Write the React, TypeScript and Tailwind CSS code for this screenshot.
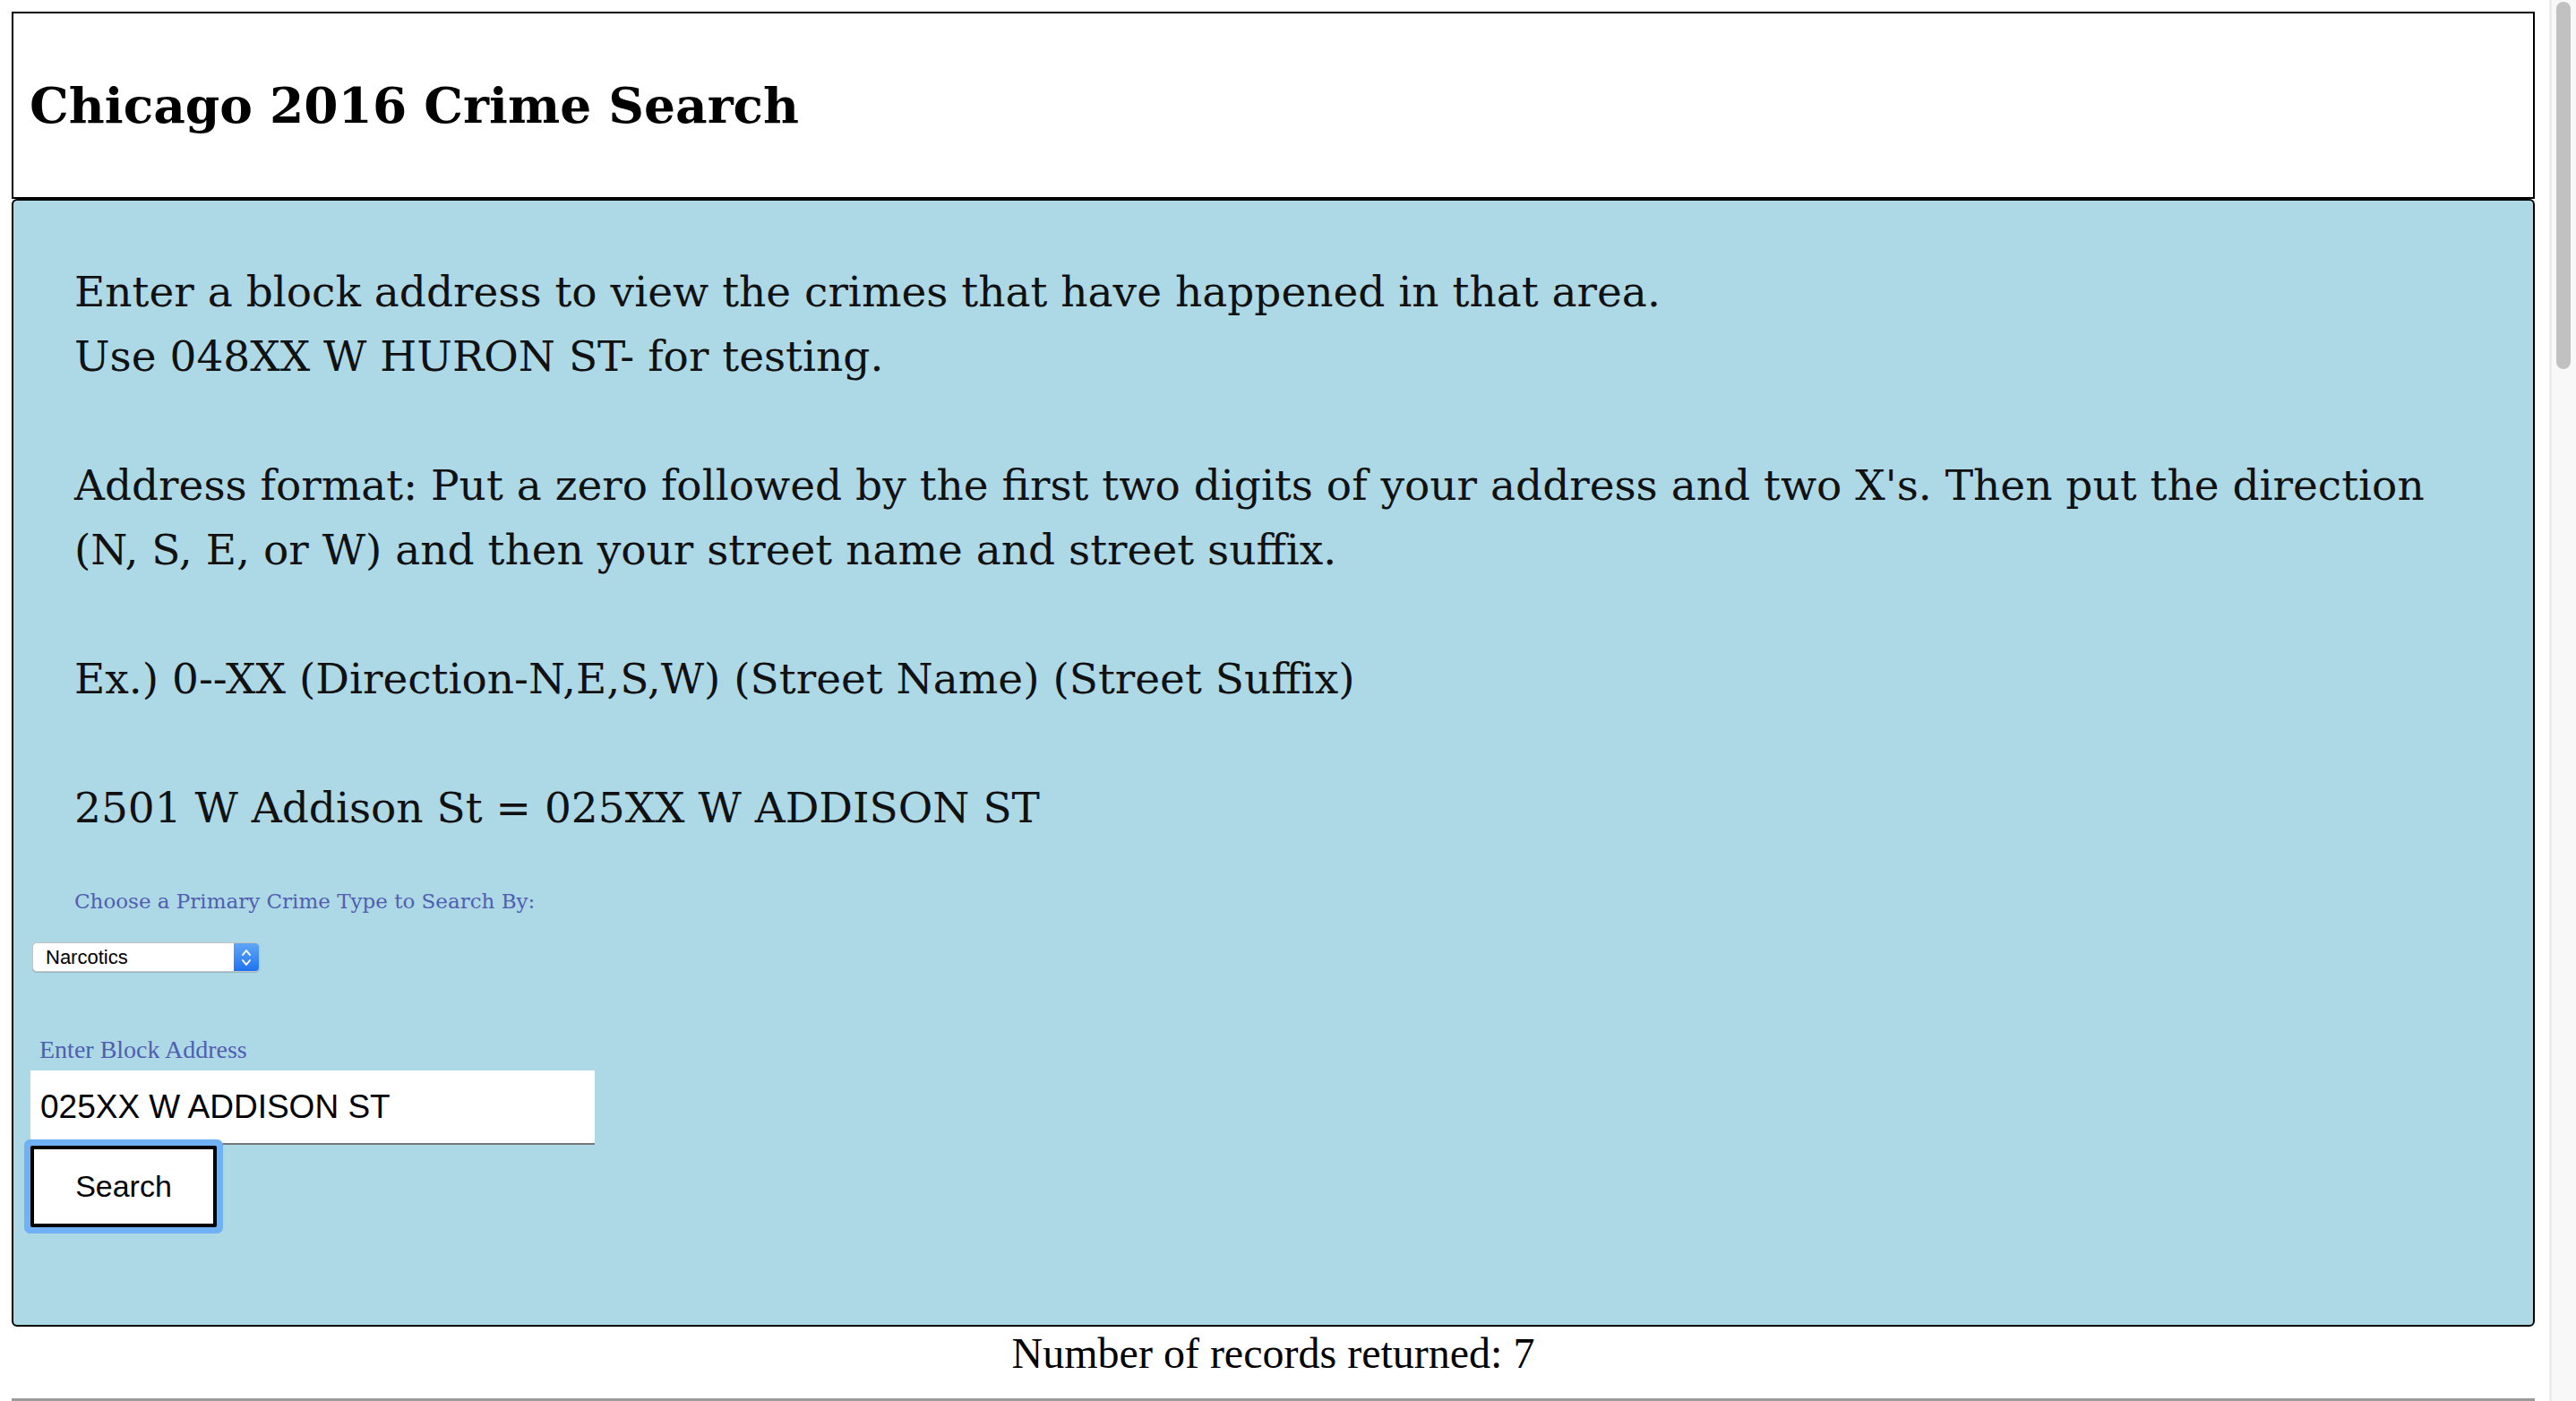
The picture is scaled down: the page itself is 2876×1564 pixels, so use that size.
import { useState } from 'react';

const serif = { fontFamily: '"DejaVu Serif", "Liberation Serif", serif' };

function FakeSelect({ value }: { value: string }) {
	return (
		<div className="ml-[2px] flex h-[33px] w-[254px] items-stretch overflow-hidden rounded-[5px] border border-[#c3c3c3] bg-white shadow-[0_1px_1px_rgba(0,0,0,0.15)]">
			<div
				className="flex flex-1 items-center pl-[14px] text-[22px] text-black"
				style={{ fontFamily: '"Liberation Sans", Arial, sans-serif' }}
			>
				{value}
			</div>
			<div className="flex w-[28px] items-center justify-center bg-gradient-to-b from-[#5fa6f7] to-[#1c74f0]">
				<svg width="12" height="22" viewBox="0 0 12 22" fill="none">
					<path d="M2 8 L6 3 L10 8" stroke="white" strokeWidth="2" strokeLinecap="round" strokeLinejoin="round" />
					<path d="M2 14 L6 19 L10 14" stroke="white" strokeWidth="2" strokeLinecap="round" strokeLinejoin="round" />
				</svg>
			</div>
		</div>
	);
}

export default function App() {
	const [address, setAddress] = useState('025XX W ADDISON ST');

	return (
		<div className="flex h-[1564px] w-full overflow-hidden bg-white">
			<div className="ml-[13px] mr-[16px] flex min-w-0 flex-1 flex-col pt-[13px]">
				{/* Header */}
				<div className="flex h-[210px] items-center border-2 border-black pl-[18px]">
					<h1 className="text-[55px] font-bold leading-none text-black" style={serif}>
						Chicago 2016 Crime Search
					</h1>
				</div>

				{/* Search panel */}
				<div className="rounded-[6px] border-2 border-black bg-[#add8e6] px-[19px] pb-[109px] pt-[66px]">
					<p className="ml-[49px] whitespace-nowrap text-[47px] leading-[72px] text-[#111]" style={serif}>
						Enter a block address to view the crimes that have happened in that area.
						<br />
						Use 048XX W HURON ST- for testing.
						<br />
						<br />
						Address format: Put a zero followed by the first two digits of your address and two X's. Then put the direction
						<br />
						(N, S, E, or W) and then your street name and street suffix.
						<br />
						<br />
						Ex.) 0--XX (Direction-N,E,S,W) (Street Name) (Street Suffix)
						<br />
						<br />
						2501 W Addison St = 025XX W ADDISON ST
					</p>

					<div className="ml-[49px] mt-[48px] text-[23px] leading-[40px] text-[#4f5fb0]" style={serif}>
						Choose a Primary Crime Type to Search By:
					</div>

					<div className="mt-[26px]">
						<FakeSelect value="Narcotics" />
					</div>

					<div
						className="ml-[10px] mt-[67px] text-[28px] leading-[40px] text-[#4f5fb0]"
						style={{ fontFamily: '"Liberation Serif", serif' }}
					>
						Enter Block Address
					</div>

					<input
						className="mt-[3px] block h-[83px] w-[630px] border-0 border-b-2 border-[#777] bg-white pl-[11px] text-[37px] text-black outline-none"
						style={{ fontFamily: '"Liberation Sans", Arial, sans-serif' }}
						value={address}
						onChange={e => setAddress(e.target.value)}
					/>

					<button
						className="mt-[1px] block h-[91px] w-[208px] rounded-[2px] border-4 border-black bg-white text-[34px] text-black shadow-[0_0_0_7px_#70b0f4]"
						style={{ fontFamily: '"Liberation Sans", Arial, sans-serif' }}
					>
						Search
					</button>
				</div>

				{/* Results */}
				<div
					className="flex h-[60px] items-center justify-center text-[48px] text-black"
					style={{ fontFamily: '"Liberation Serif", serif' }}
				>
					Number of records returned: 7
				</div>
				<div className="mt-[20px] h-[3px] bg-[#9b9b9b]" />
			</div>

			{/* Scrollbar */}
			<div className="w-[30px] shrink-0 border-l-[3px] border-[#ececec] bg-[#f8f8f8] pl-[5px] pt-[2px]">
				<div className="h-[410px] w-[16px] rounded-full bg-[#c1c1c1]" />
			</div>
		</div>
	);
}
